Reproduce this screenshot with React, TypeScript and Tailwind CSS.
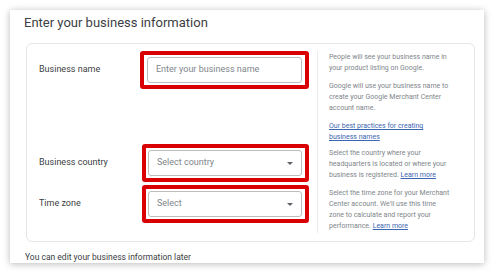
import type { ReactNode } from 'react';

function Field({ placeholder, select, shift }: { placeholder: string; select?: boolean; shift?: boolean }) {
  return (
    <div
      className={`border-[4px] border-[#d80000] rounded-[3px] px-[3px] py-[2px] ${shift ? 'ml-[2px] pl-[2px] w-[167px]' : 'w-[169px]'}`}
    >
      <div className="h-[26px] border border-[#bdbdbd] rounded-[3px] bg-white flex items-center justify-between pl-[8px] pr-[8px]">
        <span className="text-[9px] text-[#80868b]">{placeholder}</span>
        {select && (
          <svg width="6" height="3" viewBox="0 0 6 3">
            <path d="M0 0h6L3 3z" fill="#5f6368" />
          </svg>
        )}
      </div>
    </div>
  );
}

function Row({ label, field, help, height, helpTop }: { label: string; field: ReactNode; help: ReactNode; height: string; helpTop: string }) {
  return (
    <div className={`flex ${height}`}>
      <div className="flex items-center self-start">
        <div className="w-[113px] pl-[12px] text-[9px] text-[#3c4043]">{label}</div>
        {field}
      </div>
      <div className={`ml-[8px] border-l border-[#ececec] pl-[11px] ${helpTop} text-[7px] leading-[11px] text-[#80868b]`}>
        {help}
      </div>
    </div>
  );
}

const link = 'text-[#3c66b0] underline';

export default function App() {
  return (
    <div className="w-[497px] h-[278px] bg-white pt-[10px] pl-[10px]" style={{ fontFamily: 'Roboto, sans-serif' }}>
      <div className="w-[474px] h-[253px] bg-white shadow-[0_1px_7px_rgba(0,0,0,0.28)] pt-[5px]">
        <h1 className="pl-[14px] text-[13px] leading-[16px] text-[#3c4043]">Enter your business information</h1>

        <div className="ml-[16px] mt-[12px] w-[449px] border border-[#e6e6e6] rounded-[6px] pt-[7px] pb-[8px]">
          <Row
            label="Business name"
            height="h-[93px]"
            helpTop="pt-[1px]"
            field={<Field placeholder="Enter your business name" />}
            help={
              <div className="flex flex-col gap-[7px]">
                <p>
                  People will see your business name in
                  <br />
                  your product listing on Google.
                </p>
                <p>
                  Google will use your business name to
                  <br />
                  create your Google Merchant Center
                  <br />
                  account name.
                </p>
                <p className={link}>
                  Our best practices for creating
                  <br />
                  business names
                </p>
              </div>
            }
          />
          <Row
            label="Business country"
            height="h-[41px]"
            helpTop="pt-[4px]"
            field={<Field placeholder="Select country" select shift />}
            help={
              <p>
                Select the country where your
                <br />
                headquarters is located or where your
                <br />
                business is registered. <span className={link}>Learn more</span>
              </p>
            }
          />
          <Row
            label="Time zone"
            height="h-[48px]"
            helpTop="pt-[3px]"
            field={<Field placeholder="Select" select shift />}
            help={
              <p>
                Select the time zone for your Merchant
                <br />
                Center account. We'll use this time
                <br />
                zone to calculate and report your
                <br />
                performance. <span className={link}>Learn more</span>
              </p>
            }
          />
        </div>

        <p className="pl-[15px] mt-[10px] text-[8.5px] leading-[11px] text-[#3c4043]">You can edit your business information later</p>
      </div>
    </div>
  );
}
